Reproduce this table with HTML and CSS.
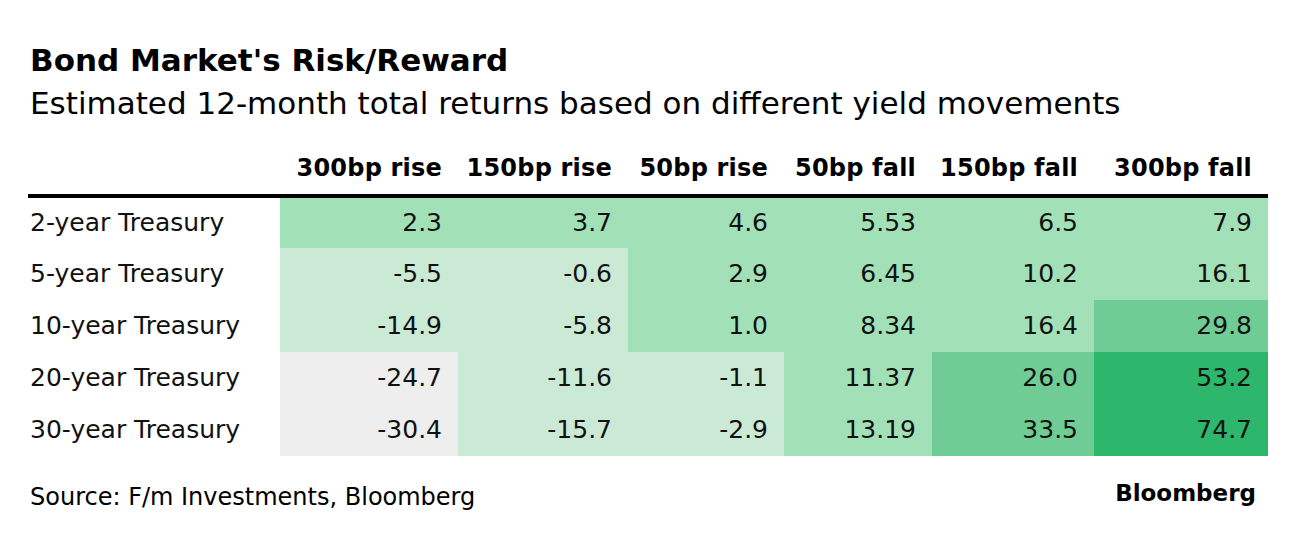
FILE: index.html
```html
<!DOCTYPE html>
<html>
<head>
<meta charset="utf-8">
<link rel="stylesheet" href="styles.css">
</head>
<body>
<div class="chart">
  <h1 class="title">Bond Market's Risk/Reward</h1>
  <p class="subtitle">Estimated 12-month total returns based on different yield movements</p>
  <table class="grid">
    <colgroup>
      <col class="c-label"><col class="c1"><col class="c2"><col class="c3"><col class="c4"><col class="c5"><col class="c6">
    </colgroup>
    <thead>
      <tr>
        <th class="h-label"></th>
        <th>300bp rise</th>
        <th>150bp rise</th>
        <th>50bp rise</th>
        <th>50bp fall</th>
        <th>150bp fall</th>
        <th>300bp fall</th>
      </tr>
    </thead>
    <tbody>
      <tr>
        <td class="label">2-year Treasury</td>
        <td class="l2">2.3</td><td class="l2">3.7</td><td class="l2">4.6</td><td class="l2">5.53</td><td class="l2">6.5</td><td class="l2">7.9</td>
      </tr>
      <tr>
        <td class="label">5-year Treasury</td>
        <td class="l1">-5.5</td><td class="l1">-0.6</td><td class="l2">2.9</td><td class="l2">6.45</td><td class="l2">10.2</td><td class="l2">16.1</td>
      </tr>
      <tr>
        <td class="label">10-year Treasury</td>
        <td class="l1">-14.9</td><td class="l1">-5.8</td><td class="l2">1.0</td><td class="l2">8.34</td><td class="l2">16.4</td><td class="l3">29.8</td>
      </tr>
      <tr>
        <td class="label">20-year Treasury</td>
        <td class="l0">-24.7</td><td class="l1">-11.6</td><td class="l1">-1.1</td><td class="l2">11.37</td><td class="l3">26.0</td><td class="l4">53.2</td>
      </tr>
      <tr>
        <td class="label">30-year Treasury</td>
        <td class="l0">-30.4</td><td class="l1">-15.7</td><td class="l1">-2.9</td><td class="l2">13.19</td><td class="l3">33.5</td><td class="l4">74.7</td>
      </tr>
    </tbody>
  </table>
  <div class="footer">
    <span class="source">Source: F/m Investments, Bloomberg</span>
    <span class="brand">Bloomberg</span>
  </div>
</div>
</body>
</html>
```
FILE: styles.css
```css
html, body {
  margin: 0;
  padding: 0;
  background: #ffffff;
}
.chart {
  width: 1240px;
  padding: 42px 0 0 28px;
  font-family: "DejaVu Sans", "Liberation Sans", sans-serif;
  color: #000;
}
.title {
  margin: 0 0 0 2px;
  font-size: 31px;
  line-height: 36px;
  font-weight: 700;
}
.subtitle {
  margin: 7px 0 0 2px;
  font-size: 31px;
  line-height: 36px;
  font-weight: 400;
}
.grid {
  border-collapse: collapse;
  table-layout: fixed;
  width: 1240px;
}
.c-label { width: 252px; }
.c1 { width: 178px; }
.c2 { width: 170px; }
.c3 { width: 156px; }
.c4 { width: 148px; }
.c5 { width: 162px; }
.c6 { width: 174px; }
.grid th {
  height: 61px;
  padding: 0 16px 12px 0;
  vertical-align: bottom;
  text-align: right;
  font-size: 24px;
  line-height: 28px;
  font-weight: 700;
  letter-spacing: 0.2px;
  border-bottom: 4px solid #000;
  white-space: nowrap;
}
.grid tbody tr {
  height: 52px;
}
.grid td {
  padding: 0 16px 0 0;
  vertical-align: middle;
  text-align: right;
  font-size: 25px;
  line-height: 28px;
  color: #111;
  white-space: nowrap;
}
.grid td.label {
  text-align: left;
  padding-left: 2px;
  background: #fff;
}
.l0 { background: #eeeeee; }
.l1 { background: #cbead6; }
.l2 { background: #a2e0b8; }
.l3 { background: #6ecc94; }
.l4 { background: #2cb76c; }
.footer {
  display: flex;
  justify-content: space-between;
  align-items: flex-start;
  margin-top: 27px;
  padding-left: 2px;
  padding-right: 12px;
}
.source {
  font-size: 24px;
  line-height: 28px;
}
.brand {
  margin-top: -4px;
  font-weight: 700;
  font-size: 23px;
  line-height: 28px;
}
```
